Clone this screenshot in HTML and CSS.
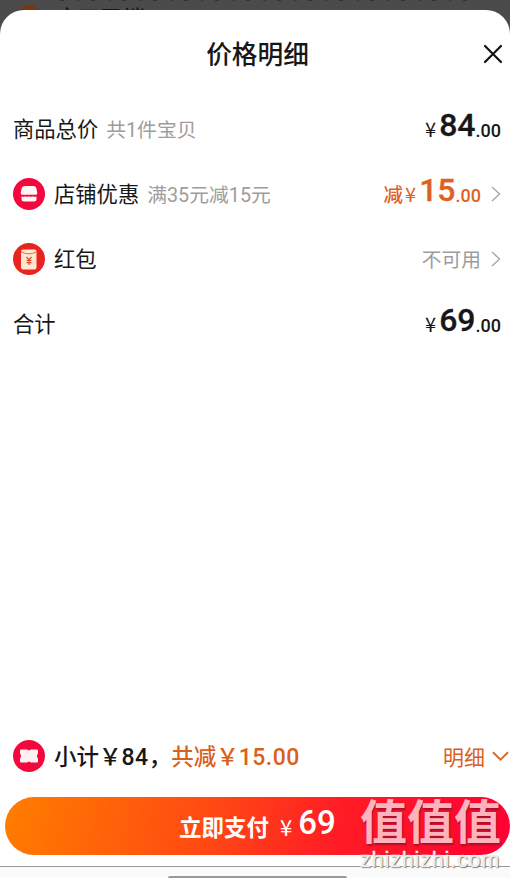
FILE: index.html
```html
<!DOCTYPE html>
<html lang="zh-CN">
<head>
<meta charset="utf-8">
<title>价格明细</title>
<link rel="stylesheet" href="styles.css">
</head>
<body>
<div class="screen">
  <div class="backdrop" aria-hidden="true">
    <span class="strip"></span>
    <span class="dot"></span>
    <span class="shop">店口又端</span>
  </div>
  <main class="sheet">
    <header class="head">
      <h1>价格明细</h1>
      <svg class="close" width="20" height="20" viewBox="0 0 20 20"><path d="M2 2l16 16M18 2L2 18"/></svg>
    </header>
    <section class="rows">
      <div class="row">
        <span class="label">商品总价</span><span class="note">共1件宝贝</span>
        <span class="price"><i>¥</i><b>84</b><em>.00</em></span>
      </div>
      <div class="row">
        <svg class="icon" viewBox="0 0 32 32"><circle cx="16" cy="16" r="16" fill="#f2083c"/><path fill="#fff4f4" d="M11.500 8h9q2.500 0 3 3l.8 4q0 1.800-1.300 1.800H9q-1.300 0-1.300-1.800l.8-4q.5-3 3-3zM8.500 18.300q1.900 1 3.750 0 1.900 1 3.750 0 1.900 1 3.750 0 1.900 1 3.750 0V21q0 2.500-2.500 2.500H11q-2.500 0-2.500-2.500z"/></svg>
        <span class="label">店铺优惠</span><span class="note">满35元减15元</span>
        <span class="price cut"><u>减</u><i>¥</i><b>15</b><em>.00</em></span>
        <svg class="arrow" viewBox="0 0 10 16"><path d="M1 1l7.500 7L1 15"/></svg>
      </div>
      <div class="row">
        <svg class="icon" viewBox="0 0 32 32"><circle cx="16" cy="16" r="16" fill="#e82320"/><rect x="8" y="6.500" width="15.500" height="20" rx="2" fill="#ffe8cd"/><path d="M8 9q8 3.500 15.500 0" fill="none" stroke="#e86b51"/><path d="M13.500 14l2.500 3 2.500-3M16 17v5M13.500 17.500h5M13.500 19.600h5" fill="none" stroke="#e3482f" stroke-width="1.200"/></svg>
        <span class="label">红包</span>
        <span class="off">不可用</span>
        <svg class="arrow" viewBox="0 0 10 16"><path d="M1 1l7.500 7L1 15"/></svg>
      </div>
      <div class="row">
        <span class="label">合计</span>
        <span class="price"><i>¥</i><b>69</b><em>.00</em></span>
      </div>
    </section>
    <footer class="foot">
      <div class="sum">
        <svg class="icon" viewBox="0 0 32 32"><circle cx="16" cy="16" r="16" fill="#f2083c"/><path fill="#fff1f1" d="M8 9.500h6l2 1 2-1h6q1 0 1 1v3q-2 2.500 0 5v3q0 1-1 1h-6l-2-1-2 1H8q-1 0-1-1v-3q2-2.500 0-5v-3q0-1 1-1z"/></svg>
        <span class="subtotal">小计￥<strong>84</strong>，</span><span class="saved">共减￥<strong>15.00</strong></span>
        <span class="detail">明细</span>
        <svg class="down" viewBox="0 0 18 12"><path d="M1 2l8 8 8-8"/></svg>
      </div>
      <div class="pay"><span>立即支付</span><i>¥</i><b>69</b></div>
      <div class="nav"><span class="bar"></span></div>
    </footer>
  </main>
  <div class="mark"><span class="mark-cn">值值值</span><span class="mark-url">zhizhizhi.com</span></div>
</div>
</body>
</html>
```
FILE: styles.css
```css
* { box-sizing: border-box; }
body { margin: 0; background: #4b4b4b; font-family: Roboto, "Noto Sans CJK SC", sans-serif; color: #171717; }
i, em, u { font-style: normal; text-decoration: none; }
.screen { position: relative; width: 510px; height: 878px; overflow: hidden; padding-top: 10px; }
.backdrop { position: absolute; inset: 0; height: 36px; overflow: hidden; }
.strip { position: absolute; left: 60px; top: 0; width: 415px; height: 1px; background: repeating-linear-gradient(90deg, #333 0 4px, #4b4b4b 4px 17px, #3a3a3a 17px 20px, #4b4b4b 20px 31px); }
.dot { position: absolute; left: 17px; top: 5px; width: 24px; height: 24px; border-radius: 50%; background: #763812; }
.shop { position: absolute; left: 55px; top: 5px; font-size: 22.500px; line-height: 28px; font-weight: 500; color: #181818; }
.sheet { position: relative; height: 868px; background: #fff; border-radius: 24px 24px 0 0; display: flex; flex-direction: column; }
.head { height: 87px; padding-right: 7px; display: flex; align-items: center; }
h1 { flex: 1; margin: 0; padding: 2px 0 0 32px; text-align: center; font-size: 25.700px; font-weight: 500; line-height: 36px; }
.close { fill: none; stroke: #111; stroke-width: 2.200; stroke-linecap: round; }
.rows { padding: 0 9px 0 13px; margin-top: -1px; }
.row { height: 65px; display: flex; align-items: center; white-space: nowrap; }
.icon { width: 32px; height: 32px; margin-right: 9px; flex: none; }
.label { font-size: 21.300px; line-height: 30px; padding-top: 3px; }
.note { margin-left: 8px; font-size: 19.800px; color: #9d9d9d; }
.price { margin-left: auto; padding-bottom: 7px; display: flex; align-items: baseline; font-weight: 500; }
.price i { font: 400 20px/24px "Noto Sans CJK SC", sans-serif; margin: 0 3px -1px 0; transform: translateY(1px); }
.price b { font-size: 32px; font-weight: 500; line-height: 40px; -webkit-text-stroke: .3px currentColor; }
.price em { font-size: 18px; transform: translateY(1px); }
.cut { color: #e0601f; }
.cut u { font-size: 19.500px; margin-right: 2px; transform: translateY(1px); }
.arrow { width: 10px; height: 16px; margin-left: 10px; fill: none; stroke: #aaa; stroke-width: 1.500; }
.off { margin-left: auto; font-size: 19.800px; color: #9d9d9d; }
.foot { margin-top: auto; }
.sum { height: 60px; padding: 0 1px 0 13px; display: flex; align-items: center; white-space: nowrap; font-size: 22.500px; font-weight: 500; }
.subtotal, .saved { margin-top: -2px; }
.sum strong { font-weight: 500; font-size: 23px; letter-spacing: .5px; }
.saved, .detail { color: #db5f1c; }
.detail { margin-left: auto; font-size: 21px; font-weight: 400; }
.down { width: 17px; height: 12px; margin-left: 7px; fill: none; stroke: #d5692e; stroke-width: 2; }
.pay { height: 58px; margin: 11px 0 11px 5px; border-radius: 29px; background: linear-gradient(105deg, #ff7a00 3%, #ff4a13 40%, #ff1d25 65%, #ff0033 100%); color: #fff; display: flex; align-items: baseline; padding-left: 174px; line-height: 52px; font-size: 22.500px; font-weight: 700; }
.pay span { transform: translateY(2px); }
.pay i { font: 400 22px/30px "Noto Sans CJK SC", sans-serif; margin: 0 6px 0 11px; transform: translateY(2px); }
.pay b { font-size: 33px; font-weight: 500; line-height: 52px; }
.nav { height: 12px; border-top: 1px solid #999; background: #fafafa; padding-top: 9px; }
.bar { display: block; width: 179px; height: 4px; margin-left: 168px; background: #999; border-radius: 2px; }
.mark { position: absolute; left: 360px; top: 793px; width: 150px; display: flex; flex-direction: column; }
.mark-cn { font: 700 47px/56px "Noto Sans CJK SC", sans-serif; height: 56px; margin-top: -2px; color: #ffb4bd; text-shadow: 1px 2px 2px #a5102b; }
.mark-url { font: 21.500px/24px "Liberation Sans", sans-serif; margin-top: 1px; letter-spacing: .85px; color: #eee; -webkit-text-stroke: .4px #eee; text-shadow: 1px 1px 1px #666; }
```
